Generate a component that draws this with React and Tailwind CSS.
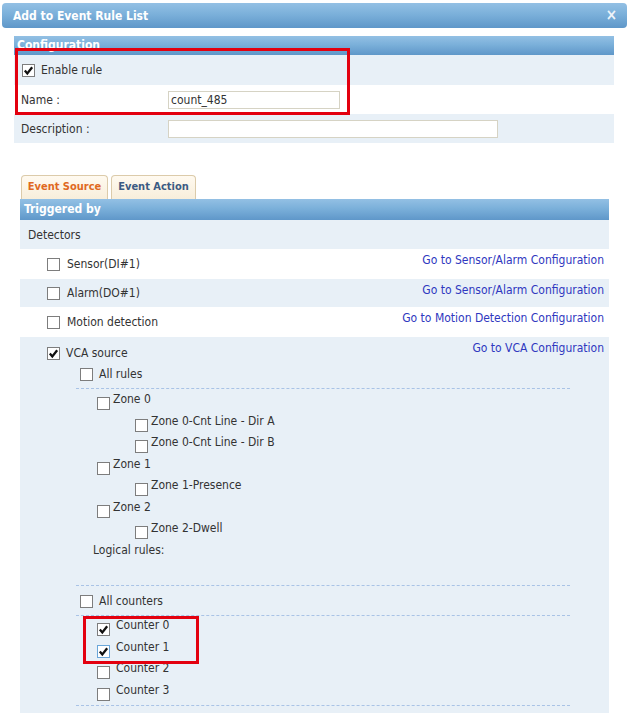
import React from "react";

const Box = ({ checked, focus, className = "" }) => (
  <span
    className={`inline-flex w-[13px] h-[13px] shrink-0 items-center justify-center border bg-white ${
      focus ? "border-[#6aa6d9]" : "border-[#7d7d7d]"
    } ${className}`}
  >
    {checked && (
      <svg viewBox="0 0 12 12" className="w-[11px] h-[11px]">
        <path d="M2 6 L4.7 9.2 L10 2.4" fill="none" stroke="#111" strokeWidth="2.5" />
      </svg>
    )}
  </span>
);

const Dashed = ({ className = "" }) => (
  <div className={`ml-[56px] w-[494px] border-t border-dashed border-[#a9c3e6] ${className}`} />
);

const Link = ({ children }) => (
  <span className="ml-auto self-start mt-[4px] pr-[5px] leading-[14px] text-[#2f38c0]">{children}</span>
);

const TreeRow = ({ indent, label, checked, focus, gap = "gap-[3px]" }) => (
  <div className={`h-[21.5px] flex items-start ${gap} ${indent}`}>
    <Box checked={checked} focus={focus} className="mt-[5px]" />
    <span className="leading-[14px]">{label}</span>
  </div>
);

export default function App() {
  const header =
    "bg-[linear-gradient(to_bottom,#93c0e4,#7bb0da_45%,#5f97c9)] text-white font-bold text-[12px]";

  return (
    <div className="relative w-[629px] h-[713px] overflow-hidden bg-white font-['DejaVu_Sans_Condensed','DejaVu_Sans',sans-serif] text-[12px] text-[#333]">
      {/* ---------- Title bar ---------- */}
      <div className={`mx-[2px] mt-[3px] h-[25px] rounded-[4px] flex items-center justify-between pl-[11px] pr-[10px] ${header}`}>
        <span>Add to Event Rule List</span>
        <span className="text-[15px] leading-none text-[#eef4fa]">×</span>
      </div>

      {/* ---------- Configuration ---------- */}
      <div className="ml-[14px] w-[600px] mt-[8px]">
        <div className={`h-[19px] leading-[19px] pl-[3px] ${header}`}>Configuration</div>
        <div className="h-[30px] bg-[#e8f0f7] flex items-center pl-[8px] gap-[6px]">
          <Box checked />
          <span>Enable rule</span>
        </div>
        <div className="h-[29px] bg-white flex items-center pl-[7px]">
          <span className="w-[147px]">Name :</span>
          <input
            defaultValue="count_485"
            className="w-[172px] h-[18px] border border-[#d6d3c4] bg-white px-[2px] text-[12px] text-[#333] outline-none"
          />
        </div>
        <div className="h-[29px] bg-[#e8f0f7] flex items-center pl-[7px]">
          <span className="w-[147px]">Description :</span>
          <input className="w-[330px] h-[18px] border border-[#d6d3c4] bg-white outline-none" />
        </div>
      </div>

      {/* ---------- Tabs ---------- */}
      <div className="ml-[21px] mt-[32px] flex gap-[3px] h-[24px] text-[11px]">
        <div className="w-[87px] rounded-t-[4px] border border-b-0 border-[#dccbaa] bg-[linear-gradient(to_bottom,#fffaf0,#f8eedb)] flex items-center justify-center font-bold text-[#e0691f]">
          Event Source
        </div>
        <div className="w-[85px] rounded-t-[4px] border border-b-0 border-[#dccbaa] bg-[linear-gradient(to_bottom,#fffaf0,#f8eedb)] flex items-center justify-center font-bold text-[#3c5b83]">
          Event Action
        </div>
      </div>

      {/* ---------- Triggered by ---------- */}
      <div className="ml-[20px] w-[589px]">
        <div className={`h-[21px] leading-[21px] pl-[4px] ${header}`}>Triggered by</div>
        <div className="h-[29px] bg-[#e8f0f7] flex items-center pl-[8px]">Detectors</div>

        <div className="h-[30px] bg-white flex items-center pl-[27px] gap-[7px]">
          <Box />
          <span>Sensor(DI#1)</span>
          <Link>Go to Sensor/Alarm Configuration</Link>
        </div>
        <div className="h-[28px] bg-[#e8f0f7] flex items-center pl-[27px] gap-[7px]">
          <Box />
          <span>Alarm(DO#1)</span>
          <Link>Go to Sensor/Alarm Configuration</Link>
        </div>
        <div className="h-[30px] bg-white flex items-center pl-[27px] gap-[7px]">
          <Box />
          <span>Motion detection</span>
          <Link>Go to Motion Detection Configuration</Link>
        </div>

        {/* ---------- VCA source ---------- */}
        <div className="bg-[#e8f0f7] h-[380px] pt-[4px]">
          <div className="h-[24px] flex items-center pl-[27px] gap-[6px]">
            <Box checked />
            <span>VCA source</span>
            <span className="ml-auto self-start mt-[0px] pr-[5px] leading-[14px] text-[#2f38c0]">
              Go to VCA Configuration
            </span>
          </div>
          <div className="h-[18px] flex items-center pl-[60px] gap-[6px]">
            <Box />
            <span>All rules</span>
          </div>
          <Dashed className="mt-[5px]" />

          <div className="mt-[3px]">
            <TreeRow indent="pl-[77px]" label="Zone 0" />
            <TreeRow indent="pl-[115px]" label="Zone 0-Cnt Line - Dir A" />
            <TreeRow indent="pl-[115px]" label="Zone 0-Cnt Line - Dir B" />
            <TreeRow indent="pl-[77px]" label="Zone 1" />
            <TreeRow indent="pl-[115px]" label="Zone 1-Presence" />
            <TreeRow indent="pl-[77px]" label="Zone 2" />
            <TreeRow indent="pl-[115px]" label="Zone 2-Dwell" />
            <div className="h-[21.5px] pl-[73px] leading-[14px]">Logical rules:</div>
          </div>

          <Dashed className="mt-[21px]" />
          <div className="mt-[5px] h-[20px] flex items-center pl-[60px] gap-[6px]">
            <Box />
            <span>All counters</span>
          </div>
          <Dashed className="mt-[4px]" />

          <div className="mt-[2px]">
            <TreeRow indent="pl-[77px]" gap="gap-[6px]" label="Counter 0" checked />
            <TreeRow indent="pl-[77px]" gap="gap-[6px]" label="Counter 1" checked focus />
            <TreeRow indent="pl-[77px]" gap="gap-[6px]" label="Counter 2" />
            <TreeRow indent="pl-[77px]" gap="gap-[6px]" label="Counter 3" />
          </div>
          <Dashed className="mt-[1px]" />
        </div>
      </div>

      {/* ---------- Highlight boxes ---------- */}
      <div className="absolute left-[15px] top-[48px] w-[335px] h-[67px] border-[3px] border-[#e3000f]" />
      <div className="absolute left-[83px] top-[616px] w-[116px] h-[48px] border-[3px] border-[#e3000f]" />
    </div>
  );
}
